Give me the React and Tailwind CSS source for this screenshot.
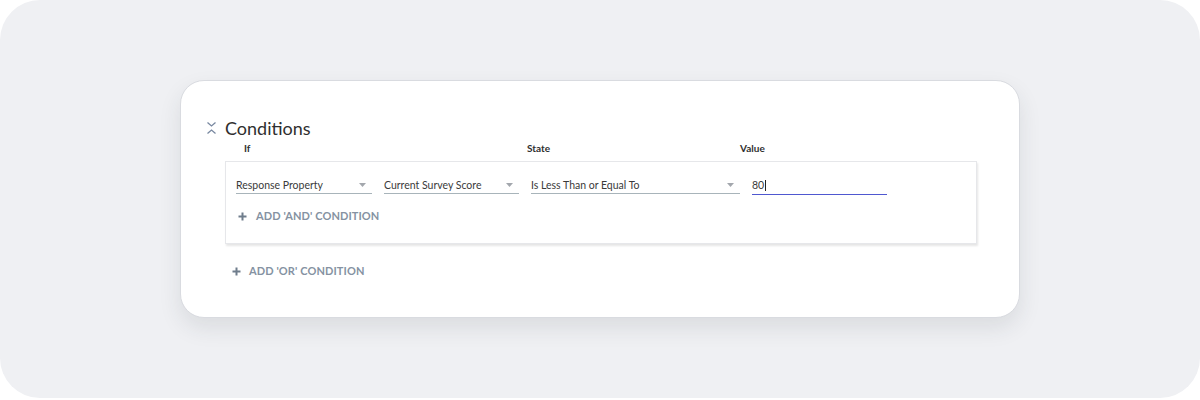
import React from "react";

const font = { fontFamily: "Lato, 'Open Sans', Arial, sans-serif" };

function Arrow() {
  return (
    <svg width="7" height="4" viewBox="0 0 7 4" className="shrink-0">
      <path d="M0 0 L7 0 L3.5 4 Z" fill="#a3a7ad" />
    </svg>
  );
}

function Select({ label, width }) {
  return (
    <div
      className="flex h-[20px] items-center justify-between border-b border-[#a8b4ba] pr-[6px] pt-[3px]"
      style={{ width }}
    >
      <span className="text-[10.5px] leading-none text-[#3a3a3a]">{label}</span>
      <Arrow />
    </div>
  );
}

function Plus() {
  return (
    <svg width="9" height="9" viewBox="0 0 9 9" className="shrink-0">
      <path d="M4.5 0.5 V8.5 M0.5 4.5 H8.5" stroke="#6f7d8c" strokeWidth="2" />
    </svg>
  );
}

export default function App() {
  return (
    <div className="h-[400px] w-[1200px] bg-white" style={font}>
      <div className="h-[398px] rounded-[40px] bg-[#eff0f3] px-[180px] pt-[80px]">
        <div className="h-[238px] rounded-[24px] border border-[#d9dbe0] bg-white pl-[25px] pt-[36px] shadow-[0_10px_22px_rgba(40,45,60,0.10)]">
          <div className="flex h-[22px] items-center">
            <svg width="11" height="14" viewBox="0 0 11 14" className="mr-[8px]">
              <path d="M1.5 1.5 L5.5 5 L9.5 1.5 M1.5 12.5 L5.5 9 L9.5 12.5" stroke="#7888a0" strokeWidth="1.3" fill="none" />
            </svg>
            <span className="text-[18px] leading-none text-[#2f2f2f]">Conditions</span>
          </div>
          <div className="ml-[38px] mt-[2px] flex h-[14px] items-center text-[10px] font-bold text-[#2f2f2f]">
            <div className="w-[283px]">If</div>
            <div className="w-[213px]">State</div>
            <div>Value</div>
          </div>
          <div className="ml-[19px] mt-[6px] h-[83px] w-[752px] border border-[#e6e7ea] bg-white pl-[10px] pt-[12px] shadow-[1px_2px_2px_rgba(0,0,0,0.10)]">
            <div className="flex gap-[12px]">
              <Select label="Response Property" width={136} />
              <Select label="Current Survey Score" width={135} />
              <Select label="Is Less Than or Equal To" width={209} />
              <div className="flex h-[21px] w-[135px] items-center border-b-[1.5px] border-[#4f58d0] pt-[3px]">
                <span className="text-[10.5px] leading-none text-[#3a3a3a]">80</span>
                <span className="ml-[1px] h-[11px] w-px bg-[#222]" />
              </div>
            </div>
            <div className="ml-[2px] mt-[13px] flex h-[16px] items-center gap-[9px]">
              <Plus />
              <span className="text-[11px] font-bold tracking-[0.1px] text-[#8592a2]">ADD 'AND' CONDITION</span>
            </div>
          </div>
          <div className="ml-[26px] mt-[19px] flex h-[16px] items-center gap-[8px]">
            <Plus />
            <span className="text-[11px] font-bold tracking-[0.1px] text-[#8592a2]">ADD 'OR' CONDITION</span>
          </div>
        </div>
      </div>
    </div>
  );
}
